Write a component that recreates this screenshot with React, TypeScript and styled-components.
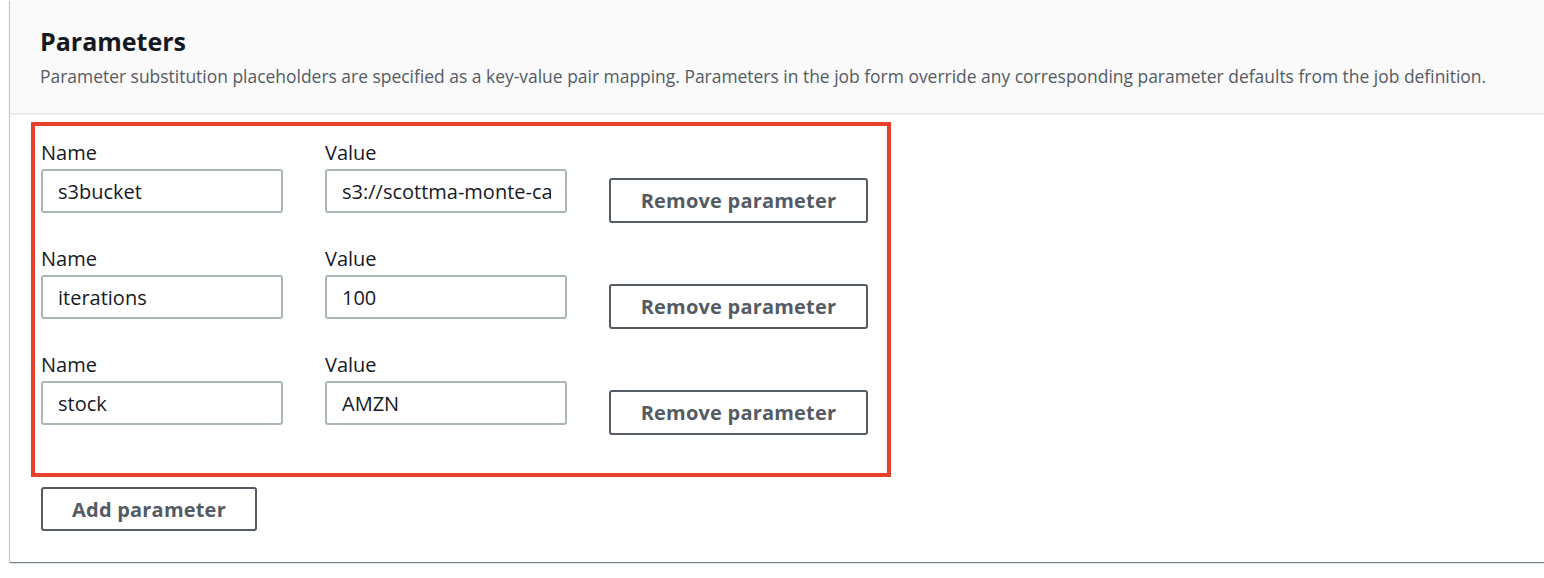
import React from "react";
import styled, { createGlobalStyle } from "styled-components";

const Global = createGlobalStyle`
  html, body { margin: 0; padding: 0; background: #ffffff; overflow: hidden; }
  body { font-family: "Open Sans", "Noto Sans", sans-serif; }
`;

const Page = styled.div`
  width: 1544px;
  height: 578px;
  padding-left: 10px;
  box-sizing: border-box;
  overflow: hidden;
`;

const Card = styled.section`
  width: 1560px;
  background: #ffffff;
  box-shadow: 0 1px 1px 0 rgba(0, 28, 36, 0.45), -1px 1px 1px 0 rgba(0, 28, 36, 0.18);
`;

const Header = styled.header`
  background: #fafafa;
  border-bottom: 2px solid #eaeded;
  height: 115px;
  box-sizing: border-box;
  padding: 25px 30px 0;
`;

const Title = styled.h2`
  margin: 0;
  font-size: 25px;
  line-height: 32px;
  font-weight: 700;
  color: #16191f;
`;

const Description = styled.p`
  margin: 8px 0 0;
  font-size: 17.45px;
  line-height: 22px;
  color: #545b64;
`;

const Body = styled.div`
  padding: 7px 21px 31px;
  display: flex;
  flex-direction: column;
  align-items: flex-start;
  gap: 10px;
`;

const Highlight = styled.div`
  width: 860px;
  height: 355px;
  box-sizing: border-box;
  border: 4px solid #e8412b;
  padding: 15px 6px 0;
  display: flex;
  flex-direction: column;
  gap: 34px;
`;

const Row = styled.div`
  display: flex;
  align-items: flex-end;
  gap: 42px;
`;

const Field = styled.label`
  display: flex;
  flex-direction: column;
  gap: 4px;
`;

const Label = styled.span`
  font-size: 20px;
  line-height: 24px;
  color: #16191f;
`;

const Input = styled.input`
  width: 242px;
  height: 44px;
  box-sizing: border-box;
  border: 2px solid #aab7b8;
  border-radius: 3px;
  padding: 0 14px 0 15px;
  font-family: inherit;
  font-size: 20px;
  color: #16191f;
  background: #ffffff;
  outline: none;
`;

const Button = styled.button<{ $width: number }>`
  width: ${(p) => p.$width}px;
  height: 45px;
  box-sizing: border-box;
  border: 2px solid #545b64;
  border-radius: 3px;
  background: #ffffff;
  color: #545b64;
  font-family: inherit;
  font-size: 20px;
  font-weight: 700;
  letter-spacing: 0.2px;
  cursor: pointer;
`;

const RemoveButton = styled(Button)`
  margin-bottom: -10px;
`;

const AddButton = styled(Button)`
  margin-left: 10px;
  height: 44px;
`;

const params = [
  { name: "s3bucket", value: "s3://scottma-monte-carlo" },
  { name: "iterations", value: "100" },
  { name: "stock", value: "AMZN" },
];

export default function App() {
  return (
    <Page>
      <Global />
      <Card>
        <Header>
          <Title>Parameters</Title>
          <Description>
            Parameter substitution placeholders are specified as a key-value pair mapping. Parameters in the job form
            override any corresponding parameter defaults from the job definition.
          </Description>
        </Header>
        <Body>
          <Highlight>
            {params.map((p) => (
              <Row key={p.name}>
                <Field>
                  <Label>Name</Label>
                  <Input defaultValue={p.name} />
                </Field>
                <Field>
                  <Label>Value</Label>
                  <Input defaultValue={p.value} />
                </Field>
                <RemoveButton $width={259}>Remove parameter</RemoveButton>
              </Row>
            ))}
          </Highlight>
          <AddButton $width={216}>Add parameter</AddButton>
        </Body>
      </Card>
    </Page>
  );
}
